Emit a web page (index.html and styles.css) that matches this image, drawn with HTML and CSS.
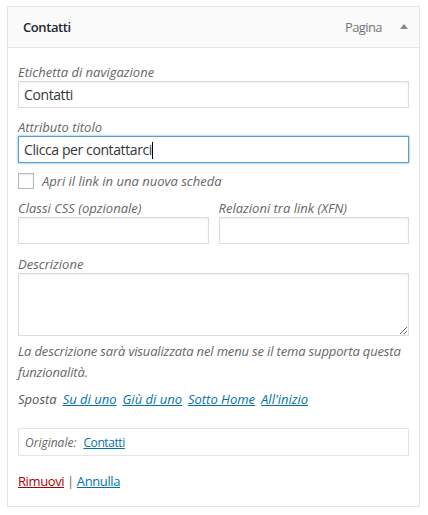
FILE: index.html
```html
<!DOCTYPE html>
<html lang="it">
<head>
<meta charset="utf-8">
<title>Voce di menu</title>
<link rel="stylesheet" href="styles.css">
</head>
<body>
<div class="item">
  <div class="handle">
    <span class="title">Contatti</span>
    <span class="controls"><span class="type">Pagina</span><span class="arrow"></span></span>
  </div>
  <div class="settings">
    <div class="field first">
      <label class="lbl">Etichetta di navigazione</label>
      <input class="txt" type="text" value="Contatti">
    </div>
    <div class="field">
      <label class="lbl">Attributo titolo</label>
      <div class="txt focus">Clicca per contattarci<span class="caret"></span></div>
    </div>
    <div class="check-row">
      <span class="checkbox"></span>
      <span class="lbl">Apri il link in una nuova scheda</span>
    </div>
    <div class="cols">
      <div class="col">
        <label class="lbl">Classi CSS (opzionale)</label>
        <input class="txt" type="text">
      </div>
      <div class="col">
        <label class="lbl">Relazioni tra link (XFN)</label>
        <input class="txt" type="text">
      </div>
    </div>
    <div class="field wide">
      <label class="lbl">Descrizione</label>
      <textarea class="area"></textarea>
    </div>
    <p class="desc">La descrizione sarà visualizzata nel menu se il tema supporta questa funzionalità.</p>
    <p class="move"><span class="move-lbl">Sposta</span><a href="#">Su di uno</a><a href="#">Giù di uno</a><a href="#">Sotto Home</a><a href="#">All'inizio</a></p>
    <div class="original"><span class="orig-lbl">Originale:</span><a href="#">Contatti</a></div>
    <div class="actions"><a href="#" class="remove">Rimuovi</a><span class="sep">|</span><a href="#" class="cancel">Annulla</a></div>
  </div>
</div>
</body>
</html>
```
FILE: styles.css
```css
* { box-sizing: border-box; }
body {
  margin: 0;
  background: #fff;
  font-family: "Segoe UI", "Open Sans", "Noto Sans", sans-serif;
  font-size: 13px;
  color: #32373c;
  letter-spacing: -0.4px;
}
.item {
  margin: 6px 0 0 7px;
  width: 413px;
}
.handle {
  display: flex;
  align-items: center;
  justify-content: space-between;
  height: 42px;
  border: 1px solid #e5e5e5;
  background: #fafafa;
  padding: 0 11px 0 15px;
}
.title { font-weight: 600; color: #23282d; }
.controls { display: flex; align-items: center; gap: 18px; }
.type { color: #72777c; letter-spacing: -0.6px; }
.arrow {
  width: 0; height: 0;
  border-left: 4px solid transparent;
  border-right: 4px solid transparent;
  border-bottom: 5px solid #888;
  margin-top: -2px;
}
.settings {
  border: 1px solid #e5e5e5;
  border-top: 0;
  box-shadow: 0 1px 1px rgba(0,0,0,.04);
  padding: 15px 10px 15px 10px;
}
.lbl {
  display: block;
  font-style: italic;
  color: #666;
  line-height: 18px;
  letter-spacing: 0;
}
.field { margin-top: 10px; }
.field.first { margin-top: 0; }
.txt {
  display: block;
  width: 100%;
  height: 27px;
  margin: 0;
  border: 1px solid #ddd;
  box-shadow: inset 0 1px 2px rgba(0,0,0,.07);
  background: #fff;
  padding: 0 5px;
  font-family: inherit;
  font-size: 14px;
  letter-spacing: -0.4px;
  color: #32373c;
  line-height: 25px;
  outline: none;
}
.txt.focus {
  border-color: #5b9dd9;
  box-shadow: 0 0 2px rgba(30,140,190,.8);
}
.caret {
  display: inline-block;
  width: 1px;
  height: 17px;
  background: #000;
  vertical-align: -4px;
}
.check-row {
  display: flex;
  align-items: center;
  gap: 8px;
  margin-top: 8px;
  height: 20px;
}
.checkbox {
  width: 16px; height: 16px;
  border: 1px solid #b4b9be;
  background: #fff;
  box-shadow: inset 0 1px 2px rgba(0,0,0,.1);
}
.check-row .lbl { line-height: 20px; }
.cols {
  display: grid;
  grid-template-columns: 1fr 1fr;
  column-gap: 10px;
  margin-top: 8px;
}
.field.wide { margin-top: 11px; }
.area {
  display: block;
  width: 100%;
  height: 63px;
  margin: 0;
  border: 1px solid #ddd;
  box-shadow: inset 0 1px 2px rgba(0,0,0,.07);
  font-family: inherit;
  font-size: 14px;
  outline: none;
}
.desc {
  margin: 5px 0 0;
  font-style: italic;
  color: #666;
  line-height: 21px;
  letter-spacing: -0.15px;
}
.move {
  margin: 6px 0 0;
  font-style: italic;
  line-height: 21px;
  color: #555;
  letter-spacing: 0;
}
.move a { margin-left: 6px; }
a { color: #0073aa; text-decoration: underline; }
.original {
  margin-top: 18px;
  height: 28px;
  border: 1px solid #e5e5e5;
  padding: 0 6px;
  display: flex;
  align-items: center;
  gap: 7px;
  font-size: 12px;
}
.orig-lbl { font-style: italic; color: #666; letter-spacing: 0; }
.actions {
  margin-top: 15px;
  line-height: 20px;
  color: #666;
}
.remove { color: #a00; }
.sep { margin: 0 3px; }
```
